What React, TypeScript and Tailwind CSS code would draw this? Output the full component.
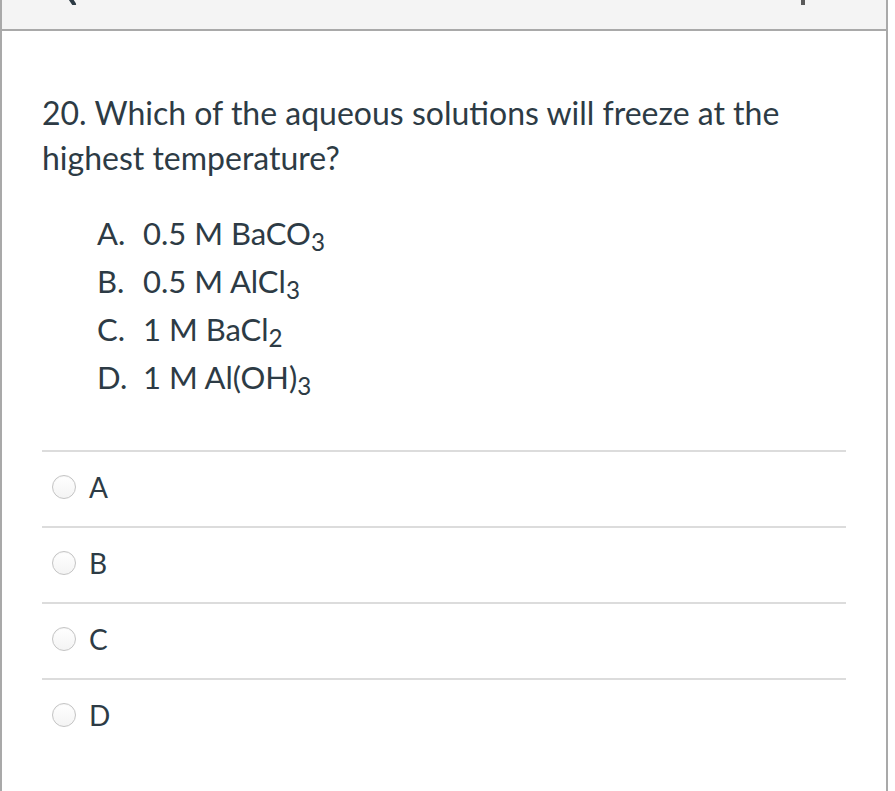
import React from 'react';

const options = ['A', 'B', 'C', 'D'];

const Radio = () => (
  <span className="w-[24px] h-[24px] rounded-full border border-[#c4c4c4] bg-gradient-to-b from-white to-[#f4f4f4] shadow-[inset_0_1px_1px_rgba(0,0,0,0.04)] shrink-0" />
);

const App = () => {
  return (
    <div className="w-[895px] h-[791px] bg-white overflow-hidden" style={{ fontFamily: 'Lato, "Noto Sans", sans-serif' }}>
      <div className="w-[888px] h-[791px] border-l-2 border-r-2 border-[#a9a9a9] text-[#2d3b45]">
        {/* header bar, only its lower edge is visible */}
        <div className="h-[31px] bg-[#f4f4f4] border-b-2 border-[#a9a9a9] flex items-start overflow-hidden">
          <svg className="ml-[58px] mt-[-25px] shrink-0" width="20" height="30" viewBox="0 0 20 30">
            <path d="M14 2 L5 15.5 L14 29" fill="none" stroke="#2d3b45" strokeWidth="4" strokeLinecap="round" strokeLinejoin="round" />
          </svg>
          <div className="ml-[721px] w-[4px] h-[5px] bg-[#5a5a5a]" />
        </div>

        <div className="px-10 pt-[59px]">
          <p className="text-[32px] leading-[45px]">
            20. Which of the aqueous solutions will freeze at the highest temperature?
          </p>

          <div className="mt-[29px] pl-[55px] text-[31px] leading-[48px]">
            <div className="flex">
              <span className="w-[46px]">A.</span>
              <span>0.5 M BaCO<sub className="text-[78%]">3</sub></span>
            </div>
            <div className="flex">
              <span className="w-[46px]">B.</span>
              <span>0.5 M AlCl<sub className="text-[78%]">3</sub></span>
            </div>
            <div className="flex">
              <span className="w-[46px]">C.</span>
              <span>1 M BaCl<sub className="text-[78%]">2</sub></span>
            </div>
            <div className="flex">
              <span className="w-[46px]">D.</span>
              <span>1 M Al(OH)<sub className="text-[78%]">3</sub></span>
            </div>
          </div>

          <div className="mt-[49px]">
            {options.map((o) => (
              <div key={o} className="border-t-2 border-[#dcdcdc] h-[76px] flex items-center gap-[13px] pl-[10px] pb-[4px]">
                <Radio />
                <span className="text-[28px]">{o}</span>
              </div>
            ))}
          </div>
        </div>
      </div>
    </div>
  );
};

export default App;
